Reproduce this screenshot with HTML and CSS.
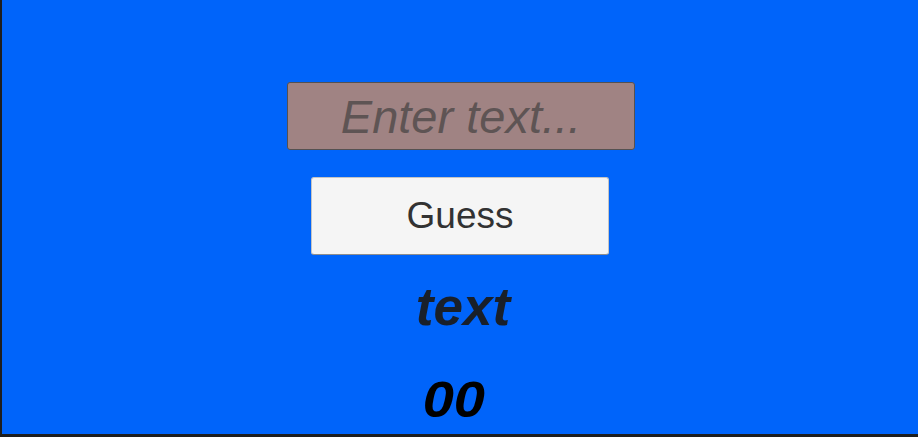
FILE: index.html
```html
<!DOCTYPE html>
<html>
<head>
<meta charset="utf-8">
<link rel="stylesheet" href="styles.css">
</head>
<body>
<div class="frame">
  <main class="stage">
    <input class="guess-input" type="text" placeholder="Enter text...">
    <button class="guess-btn" type="button">Guess</button>
    <div class="hint">text</div>
    <div class="score">00</div>
  </main>
</div>
</body>
</html>
```
FILE: styles.css
```css
html, body {
  margin: 0;
  padding: 0;
  width: 918px;
  height: 437px;
  overflow: hidden;
  background: #1e1e1e;
}
.frame {
  padding: 0 0 3px 2px;
  height: 434px;
}
.stage {
  height: 434px;
  background: #0064fa;
  display: flex;
  flex-direction: column;
  align-items: center;
  padding-top: 82px;
  box-sizing: border-box;
  font-family: "Liberation Sans", Arial, sans-serif;
}
.guess-input {
  box-sizing: border-box;
  width: 348px;
  height: 68px;
  margin: 0 0 0 2px;
  padding: 0;
  background: #a08383;
  border: 1px solid #555151;
  border-radius: 3px;
  font-family: "Liberation Sans", Arial, sans-serif;
  font-size: 47px;
  font-style: italic;
  color: #5e5454;
  text-align: center;
  outline: none;
}
.guess-input::placeholder {
  color: #5e5454;
  opacity: 1;
}
.guess-btn {
  box-sizing: border-box;
  width: 298px;
  height: 78px;
  margin-top: 27px;
  padding: 0;
  background: #f5f5f5;
  border: 1px solid #c4c4c4;
  border-bottom-color: #8e8e8e;
  border-radius: 3px;
  font-family: "Liberation Sans", Arial, sans-serif;
  font-size: 37px;
  color: #323232;
}
.hint {
  margin-top: 25px;
  font-size: 53px;
  line-height: 53px;
  font-weight: bold;
  font-style: italic;
  color: #19202a;
  padding-left: 6px;
}
.score {
  margin-top: 43px;
  font-size: 50px;
  line-height: 49px;
  font-weight: bold;
  font-style: italic;
  color: #000;
  margin-right: 13px;
  transform: scaleX(1.12);
}
```
